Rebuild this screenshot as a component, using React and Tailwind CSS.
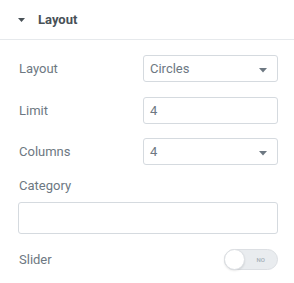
export default function App() {
  const font = { fontFamily: "Roboto, 'Liberation Sans', sans-serif" };
  const Caret = () => (
    <svg width="8" height="5" viewBox="0 0 8 5" className="absolute right-[10px] top-[12px]">
      <path d="M0 0 L8 0 L4 4.5 Z" fill="#6d7882" />
    </svg>
  );
  return (
    <div className="w-[294px] h-[283px] bg-white text-[13px]" style={font}>
      <div className="h-[40px] border-b border-[#e6e9ec] flex items-center pl-[18px]">
        <svg width="7" height="4" viewBox="0 0 7 4" className="mr-[13px]">
          <path d="M0 0 L7 0 L3.5 4 Z" fill="#495157" />
        </svg>
        <span className="font-bold text-[#495157] text-[13px] leading-none">Layout</span>
      </div>
      <div className="pl-[19px] pr-[16px]">
        <div className="mt-[15px] flex items-center justify-between">
          <span className="text-[#6d7882]">Layout</span>
          <div className="relative w-[135px] h-[27px] border border-[#d5dadf] rounded-[3px] flex items-center pl-[6px] text-[#6d7882]">
            Circles
            <Caret />
          </div>
        </div>
        <div className="mt-[15px] flex items-center justify-between">
          <span className="text-[#6d7882]">Limit</span>
          <div className="w-[135px] h-[27px] border border-[#d5dadf] rounded-[3px] flex items-center pl-[6px] text-[#6d7882]">
            4
          </div>
        </div>
        <div className="mt-[14px] flex items-center justify-between">
          <span className="text-[#6d7882]">Columns</span>
          <div className="relative w-[135px] h-[27px] border border-[#d5dadf] rounded-[3px] flex items-center pl-[6px] text-[#6d7882]">
            4
            <Caret />
          </div>
        </div>
        <div className="mt-[13px] text-[#6d7882] leading-[15px]">Category</div>
        <div className="mt-[9px] w-[260px] -ml-[1px] h-[32px] border border-[#d5dadf] rounded-[3px]"></div>
        <div className="mt-[15px] flex items-center justify-between">
          <span className="text-[#6d7882]">Slider</span>
          <div className="relative w-[54px] h-[21px] rounded-full bg-[#e9ecef] border border-[#dcdfe3] flex items-center justify-end pr-[12px]">
            <span className="text-[6px] text-[#a4afb7] font-medium">NO</span>
            <div className="absolute left-[-1px] top-[-1px] w-[21px] h-[21px] rounded-full bg-white border border-[#dcdfe3] shadow-[0_1px_2px_rgba(0,0,0,0.1)]"></div>
          </div>
        </div>
      </div>
    </div>
  );
}
